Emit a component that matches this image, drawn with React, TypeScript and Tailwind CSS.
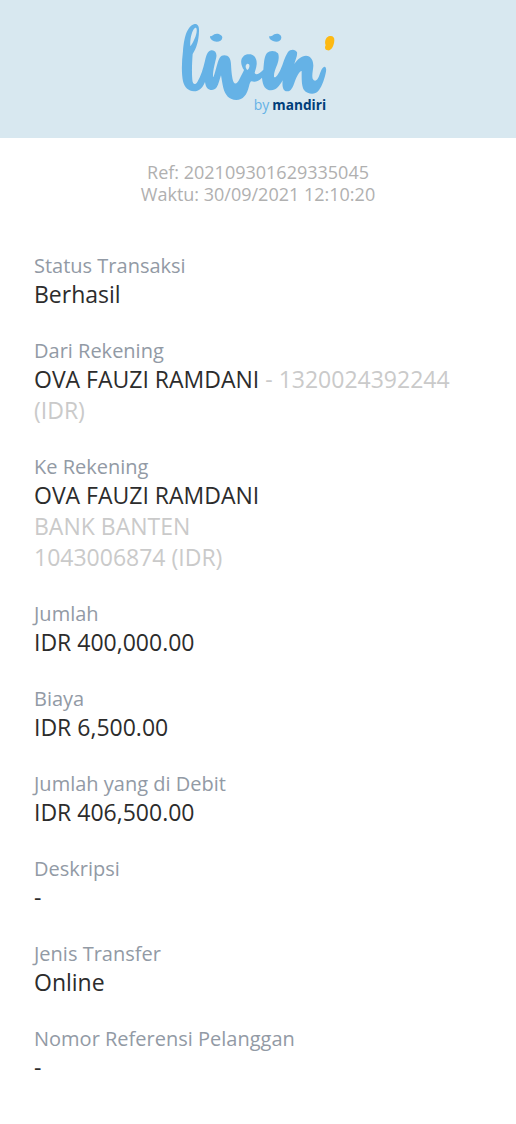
import type { ReactNode } from "react";

interface Detail {
  label: string;
  value: ReactNode;
}

const details: Detail[] = [
  { label: "Status Transaksi", value: "Berhasil" },
  {
    label: "Dari Rekening",
    value: (
      <>
        <span>OVA FAUZI RAMDANI</span>{" "}
        <span className="text-[#cacaca]">- 1320024392244</span>{" "}
        <span className="text-[#cacaca]">(IDR)</span>
      </>
    ),
  },
  {
    label: "Ke Rekening",
    value: (
      <>
        OVA FAUZI RAMDANI
        <span className="block text-[#cacaca]">BANK BANTEN</span>
        <span className="block text-[#cacaca]">1043006874 (IDR)</span>
      </>
    ),
  },
  { label: "Jumlah", value: "IDR 400,000.00" },
  { label: "Biaya", value: "IDR 6,500.00" },
  { label: "Jumlah yang di Debit", value: "IDR 406,500.00" },
  { label: "Deskripsi", value: "-" },
  { label: "Jenis Transfer", value: "Online" },
  { label: "Nomor Referensi Pelanggan", value: "-" },
];

function LivinLogo() {
  return (
    <svg
      viewBox="24 24 468 288"
      role="img"
      aria-label="livin' by mandiri"
      className="w-[156px] h-24"
    >
      <g fill="#65b2e6">
        {/* script letters, joined into one shape */}
        <path
          fillRule="evenodd"
          d="M68 30C78 29 82 38 81 52C80 82 73 104 62 120C60 148 59 178 61 198C62 212 70 214 76 204C87 185 93 165 99 140C104 118 110 108 120 109C130 110 135 118 133 129C130 144 122 170 123 190C127 187 131 166 136 150C141 133 145 124 157 124C170 124 176 134 177 150C178 172 180 194 185 205C190 213 197 207 203 194C208 184 213 176 216 168C210 160 206 148 208 138C212 123 224 119 236 121C250 124 255 137 254 151C253 163 249 171 248 177C251 185 264 178 274 167C276 148 276 128 285 117C294 108 310 109 318 118C322 126 320 140 316 151C310 166 305 178 306 188C309 195 318 183 325 168C334 149 338 128 348 114C355 105 370 104 375 115C377 125 370 138 367 150C377 135 388 126 402 125C416 125 424 138 424 155C423 170 419 184 422 194C427 204 436 201 441 187C446 173 450 160 457 158C464 158 463 170 461 178C455 204 447 222 438 232C430 242 407 242 396 228C388 216 389 190 389 171C382 171 373 190 368 204C362 222 356 233 345 232C333 231 330 218 332 199C322 217 312 229 297 229C281 229 272 216 270 191C261 202 248 205 239 202C235 202 233 208 231 217C225 243 213 258 193 258C172 258 159 243 154 222C151 210 149 196 147 184C143 195 140 211 134 220C127 231 113 230 106 223C102 218 100 211 99 204C91 223 81 232 66 232C49 232 37 219 33 202C28 176 29 144 33 111C36 75 43 37 68 30ZM69 42C60 47 53 78 55 97C65 84 76 58 74 46C73 41 71 41 69 42ZM225 150C219 154 220 162 226 168C232 164 234 155 231 151C229 149 227 149 225 150Z"
        />
        <path d="M114 66C119 68 121 65 127 61C136 56 151 62 151 71C150 81 138 86 126 82C118 79 113 72 114 66Z" />
        <path d="M292 66C298 69 300 65 307 61C317 56 329 62 328 72C326 83 314 86 303 81C295 78 290 72 292 66Z" />
      </g>
      <path
        fill="#fdb913"
        d="M470 67C480 63 488 68 487 79C486 98 477 111 467 109C459 108 457 101 461 94C457 85 460 71 470 67Z"
      />
      <text
        x="245"
        y="288"
        fontSize="42"
        fill="#65b2e6"
        className="font-['Open_Sans',sans-serif]"
      >
        by
      </text>
      <text
        x="301"
        y="288"
        fontSize="41"
        fontWeight="700"
        fill="#003d79"
        className="font-['Open_Sans',sans-serif]"
      >
        mandiri
      </text>
    </svg>
  );
}

export default function App() {
  return (
    <div className="min-h-screen bg-white font-['Open_Sans',sans-serif]">
      <header className="flex justify-center bg-[#d8e8f0] pt-[22px] pb-5">
        <LivinLogo />
      </header>

      <div className="pt-[23px] text-center text-lg leading-[22px] text-[#b0b0b0]">
        <p>Ref: 202109301629335045</p>
        <p>Waktu: 30/09/2021 12:10:20</p>
      </div>

      <dl className="flex flex-col gap-7 px-[34px] pt-12 pb-8">
        {details.map((item) => (
          <div key={item.label}>
            <dt className="text-xl leading-[26px] text-[#929aa5]">
              {item.label}
            </dt>
            <dd className="text-[23px] leading-[31px] text-[#2c2c2c]">
              {item.value}
            </dd>
          </div>
        ))}
      </dl>
    </div>
  );
}
